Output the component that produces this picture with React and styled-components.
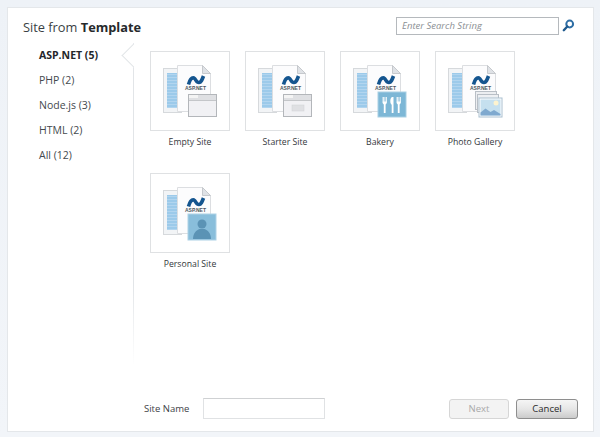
import React from 'react';
import styled, { createGlobalStyle } from 'styled-components';

const sections = [
  { name: 'ASP.NET (5)', active: true },
  { name: 'PHP (2)' },
  { name: 'Node.js (3)' },
  { name: 'HTML (2)' },
  { name: 'All (12)' },
];

const templates = [
  { name: 'Empty Site', badge: 'empty' },
  { name: 'Starter Site', badge: 'starter' },
  { name: 'Bakery', badge: 'bakery' },
  { name: 'Photo Gallery', badge: 'gallery' },
  { name: 'Personal Site', badge: 'person' },
];

const WindowBadge = ({ starter }) => (
  <g>
    <rect x="38.500" y="43.500" width="28" height="22" fill="#f1f1f4" stroke="#b3b6ba" />
    <rect x="39" y="44" width="27" height="5" fill="#dfe0e3" />
    <rect x="39" y="44" width="9" height="3" fill="#f4f4f4" />
    <line x1="39" y1="49.500" x2="66" y2="49.500" stroke="#c4c6c9" />
    {starter && <rect x="47" y="54" width="12" height="6" fill="#dfe0e3" stroke="#d0d1d4" strokeWidth="0.5" />}
  </g>
);

const BakeryBadge = () => (
  <g>
    <rect x="38" y="41" width="28" height="25" fill="#7db7d6" stroke="#a9cfe3" />
    <path d="M42.500 46v5c0 1.400.7 2 1.300 2.400V62h1.800v-8.600c.6-.4 1.300-1 1.300-2.400v-5h-.8v4.500h-.7V46h-.9v4.500h-.7V46h-.9v4.500h-.7V46z" fill="#fff" />
    <path d="M52.500 46c-1.400 0-2.200 2-2.200 4s.7 3.400 1.400 3.800V62h1.800V46z" fill="#fff" />
    <path d="M56.500 46v5c0 1.400.7 2 1.300 2.400V62h1.800v-8.600c.6-.4 1.300-1 1.300-2.400v-5h-.8v4.500h-.7V46h-.9v4.500h-.7V46h-.9v4.500h-.7V46z" fill="#fff" />
  </g>
);

const GalleryBadge = () => (
  <g>
    <rect x="40.500" y="40.500" width="21" height="18" fill="#eceef1" stroke="#b9bfc6" />
    <rect x="42.500" y="43.500" width="21" height="18" fill="#eef0f3" stroke="#b9bfc6" />
    <rect x="44" y="47" width="23" height="19" fill="#fff" stroke="#a9bfd0" />
    <rect x="45.500" y="48.500" width="20" height="16" fill="#c5e0ef" />
    <circle cx="61" cy="52" r="2.500" fill="#fdf3cf" />
    <path d="M45.500 64.500v-3l5-4 5 3.500 3.500-2 6.500 4v1.500z" fill="#7fa9cf" />
  </g>
);

const PersonBadge = () => (
  <g>
    <rect x="38" y="41" width="28" height="26" fill="#89bedb" stroke="#aed2e6" />
    <circle cx="52" cy="51" r="4.500" fill="#5b93b5" />
    <path d="M43 66c0-6 3.500-9 6.500-10h5c3 1 6.500 4 6.500 10z" fill="#5b93b5" />
  </g>
);

const Badge = ({ kind }) => {
  if (kind === 'bakery') return <BakeryBadge />;
  if (kind === 'gallery') return <GalleryBadge />;
  if (kind === 'person') return <PersonBadge />;
  return <WindowBadge starter={kind === 'starter'} />;
};

const stripRows = Array.from({ length: 12 }, (_, i) => 23.500 + i * 3);

const Thumbnail = ({ kind }) => (
  <svg width="78" height="78" viewBox="1 1 78 78">
    <rect x="13.500" y="17.500" width="18" height="44" fill="#f2f4f6" stroke="#d6d9dc" />
    <rect x="17" y="22" width="10" height="35" fill="#9ccaea" />
    {stripRows.map((y) => (
      <line key={y} x1="17" y1={y} x2="27" y2={y} stroke="#bcdaf0" strokeWidth="0.7" />
    ))}
    <path d="M27.500 14.500h25l8 8v38h-33z" fill="#fcfcfd" stroke="#dcdee1" />
    <path d="M52.500 14.500v8h8z" fill="#dfe2e6" stroke="#c6c9cd" />
    <path d="M38.500 33.500C40 28 42 26.500 44 27c2 1 2 4.500 5 4.500 2 0 3-2.500 4.500-6.500" fill="none" stroke="#14558f" strokeWidth="3.600" />
    <text x="45.500" y="39" textAnchor="middle" fontSize="5" fontWeight="700" fontFamily="Liberation Sans, sans-serif" fill="#4d5760">
      ASP.NET
    </text>
    <Badge kind={kind} />
  </svg>
);

const SearchIcon = () => (
  <svg width="13" height="13" viewBox="0 0 13 13">
    <circle cx="7.700" cy="5" r="3.400" fill="none" stroke="#2e6ea5" strokeWidth="2" />
    <line x1="5.300" y1="7.500" x2="1.800" y2="11.200" stroke="#1f5a8e" strokeWidth="2.400" strokeLinecap="round" />
  </svg>
);

const App = () => (
  <Page>
    <GlobalStyle />
    <Dialog>
      <Header>
        <Title>
          Site from <strong>Template</strong>
        </Title>
        <SearchBox>
          <SearchInput readOnly placeholder="Enter Search String" />
          <SearchIcon />
        </SearchBox>
      </Header>
      <Body>
        <Sidebar>
          {sections.map((section) => (
            <SectionItem key={section.name} $active={section.active}>
              {section.name}
            </SectionItem>
          ))}
        </Sidebar>
        <TileGrid>
          {templates.map((template) => (
            <TileCard key={template.name}>
              <Tile>
                <Thumbnail kind={template.badge} />
              </Tile>
              <TileLabel>{template.name}</TileLabel>
            </TileCard>
          ))}
        </TileGrid>
      </Body>
      <Footer>
        <NameLabel>Site Name</NameLabel>
        <NameInput readOnly />
        <Actions>
          <NextButton disabled>Next</NextButton>
          <CancelButton>Cancel</CancelButton>
        </Actions>
      </Footer>
    </Dialog>
  </Page>
);

const GlobalStyle = createGlobalStyle`
  html, body {
    margin: 0;
    padding: 0;
    background: #eff3f8;
  }
  body {
    font-family: "Open Sans", "Noto Sans", "Liberation Sans", sans-serif;
  }
`;

const Page = styled.div`
  width: 600px;
  height: 437px;
  padding: 7px 6px 5px 7px;
  box-sizing: border-box;
  background: linear-gradient(180deg, #eef2f7 0%, #f2f5f9 100%);
  overflow: hidden;
`;

const Dialog = styled.div`
  height: 100%;
  box-sizing: border-box;
  display: flex;
  flex-direction: column;
  background: #fff;
  border: 1px solid #e4e7ea;
`;

const Header = styled.div`
  height: 35px;
  flex: none;
  display: flex;
  align-items: center;
  justify-content: space-between;
  padding: 0 18px 0 15px;
`;

const Title = styled.div`
  font-size: 12.800px;
  color: #3a3f44;
  padding-top: 2px;

  strong {
    font-weight: 700;
    color: #26292c;
  }
`;

const SearchBox = styled.div`
  display: flex;
  align-items: center;
  gap: 3px;
`;

const SearchInput = styled.input`
  width: 163px;
  height: 18px;
  box-sizing: border-box;
  padding: 0 5px 1px;
  border: 1px solid #b5b9bd;
  outline: none;
  font-family: inherit;
  font-size: 9.500px;
  font-style: italic;

  &::placeholder {
    color: #8b8f94;
    opacity: 1;
  }
`;

const Body = styled.div`
  flex: 1;
  display: flex;
  min-height: 0;
`;

const Sidebar = styled.div`
  width: 126px;
  height: 322px;
  flex: none;
  box-sizing: border-box;
  padding-left: 31px;
  border-right: 1px solid;
  border-image: linear-gradient(180deg, #e2e5e8 0%, #e2e5e8 75%, #ffffff 100%) 1;
`;

const SectionItem = styled.div`
  position: relative;
  height: 25px;
  line-height: 25px;
  font-size: 10.500px;
  font-weight: ${(p) => (p.$active ? 700 : 400)};
  color: ${(p) => (p.$active ? '#23262a' : '#44494e')};

  ${(p) =>
    p.$active &&
    `
    &::after {
      content: "";
      position: absolute;
      right: -9px;
      top: 4px;
      width: 17px;
      height: 17px;
      box-sizing: border-box;
      background: #fff;
      border-left: 1px solid #e2e5e8;
      border-bottom: 1px solid #e2e5e8;
      transform: rotate(45deg);
    }
  `}
`;

const TileGrid = styled.div`
  display: grid;
  grid-template-columns: repeat(4, 80px);
  grid-auto-rows: 122px;
  column-gap: 15px;
  padding: 8px 0 0 16px;
`;

const TileCard = styled.div`
  display: flex;
  flex-direction: column;
  align-items: center;
`;

const Tile = styled.div`
  width: 80px;
  height: 80px;
  box-sizing: border-box;
  border: 1px solid #dfe1e3;
  display: flex;
`;

const TileLabel = styled.div`
  margin-top: 3px;
  height: 16px;
  line-height: 16px;
  font-size: 8.700px;
  color: #33373b;
  white-space: nowrap;
`;

const Footer = styled.div`
  height: 45px;
  flex: none;
  display: flex;
  align-items: center;
  padding: 4px 15px 0 136px;
`;

const NameLabel = styled.div`
  width: 59px;
  font-size: 9.500px;
  color: #3d4146;
`;

const NameInput = styled.input`
  width: 122px;
  height: 21px;
  box-sizing: border-box;
  border: 1px solid #e0e2e4;
  border-top-color: #cfd1d3;
  outline: none;
`;

const Actions = styled.div`
  margin-left: auto;
  display: flex;
  gap: 7px;
`;

const BaseButton = styled.button`
  height: 20px;
  box-sizing: border-box;
  padding: 0 0 1px;
  border-radius: 3px;
  font-family: inherit;
  font-size: 9.500px;
`;

const NextButton = styled(BaseButton)`
  width: 60px;
  background: #f3f3f3;
  border: 1px solid #d6d6d6;
  color: #a9a9a9;
`;

const CancelButton = styled(BaseButton)`
  width: 62px;
  background: linear-gradient(180deg, #f5f5f5 0%, #e6e6e6 50%, #cbcbcb 100%);
  border: 1px solid #8e8e8e;
  color: #2a2a2a;
`;

export default App;
